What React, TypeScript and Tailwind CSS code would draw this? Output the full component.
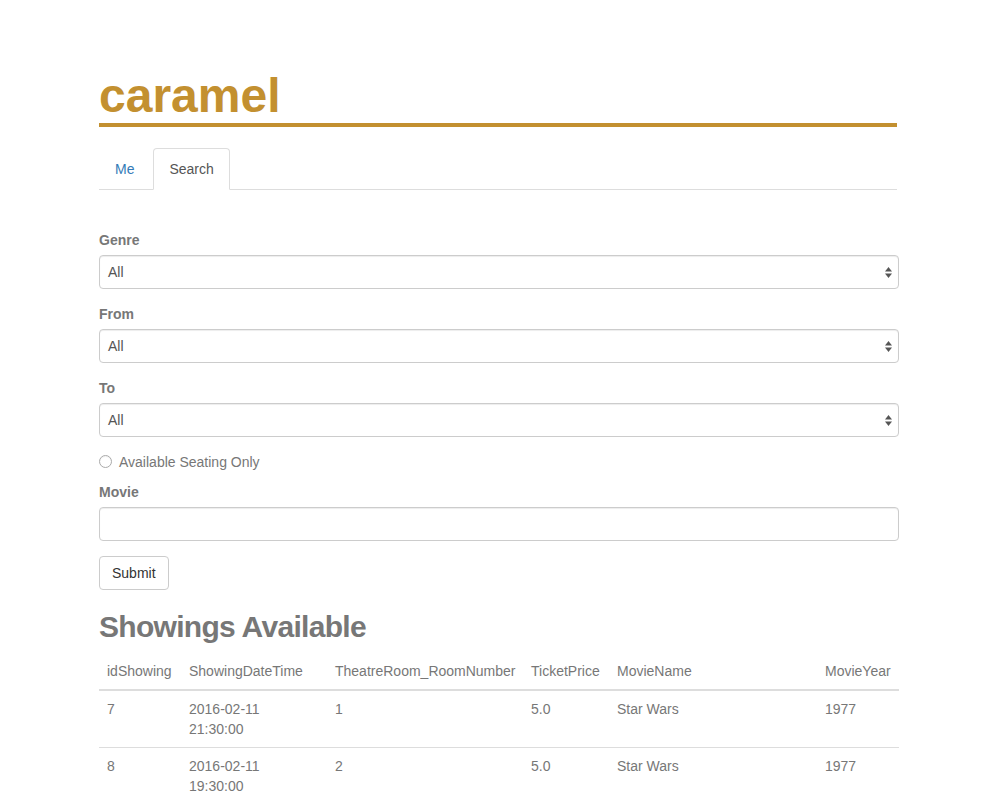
import React from 'react'

// Search results (would come from the API)
const SHOWINGS = [
  { id: '7', date: '2016-02-11', time: '21:30:00', room: '1', price: '5.0', name: 'Star Wars', year: '1977' },
  { id: '8', date: '2016-02-11', time: '19:30:00', room: '2', price: '5.0', name: 'Star Wars', year: '1977' },
]

const COLUMNS = [
  { label: 'idShowing', width: 'w-[82px]' },
  { label: 'ShowingDateTime', width: 'w-[146px]' },
  { label: 'TheatreRoom_RoomNumber', width: 'w-[196px]' },
  { label: 'TicketPrice', width: 'w-[86px]' },
  { label: 'MovieName', width: 'w-[208px]' },
  { label: 'MovieYear', width: 'w-[82px]' },
]

function SelectField({ label }: { label: string }) {
  return (
    <div className="mb-[15px]">
      <label className="block mb-[5px] text-[14px] leading-5 font-bold text-[#777]">{label}</label>
      <div className="relative h-[34px] border border-[#ccc] rounded-[4px] bg-white shadow-[inset_0_1px_1px_rgba(0,0,0,0.075)]">
        <div className="pl-[8px] leading-[32px] text-[14px] text-[#555]">All</div>
        <svg className="absolute right-[6px] top-[11px]" width="7" height="11" viewBox="0 0 7 11">
          <path d="M3.5 0 L7 4.5 L0 4.5 Z" fill="#555" />
          <path d="M3.5 11 L7 6.5 L0 6.5 Z" fill="#555" />
        </svg>
      </div>
    </div>
  )
}

export default function App() {
  return (
    <div className="min-h-[800px] bg-white font-['Liberation_Sans',Arial,sans-serif] text-[14px] text-[#777]">
      <div className="ml-[99px] w-[800px] pt-[70px]">
        {/* Header */}
        <h1 className="w-[798px] border-b-4 border-[#c39030] text-[48px] leading-[52.8px] font-bold text-[#c39030]">
          caramel
        </h1>

        {/* Tabs */}
        <ul className="mt-[21px] flex w-[798px] border-b border-[#ddd]">
          <li className="-mb-px mr-[3px]">
            <a className="block px-[15px] py-[10px] leading-5 border border-transparent text-[#337ab7]">Me</a>
          </li>
          <li className="-mb-px">
            <a className="block px-[15px] py-[10px] leading-5 border border-[#ddd] border-b-white rounded-t-[4px] bg-white text-[#555]">
              Search
            </a>
          </li>
        </ul>

        {/* Search form */}
        <form className="mt-[40px]">
          <SelectField label="Genre" />
          <SelectField label="From" />
          <SelectField label="To" />

          <div className="mb-[10px] flex items-center h-5">
            <span className="w-[13px] h-[13px] rounded-full border border-[#aaa] bg-white shadow-[inset_0_1px_1px_rgba(0,0,0,0.05)]" />
            <span className="ml-[7px] leading-5 text-[#777]">Available Seating Only</span>
          </div>

          <div className="mb-[15px]">
            <label className="block mb-[5px] leading-5 font-bold text-[#777]">Movie</label>
            <div className="h-[34px] border border-[#ccc] rounded-[4px] bg-white shadow-[inset_0_1px_1px_rgba(0,0,0,0.075)]" />
          </div>

          <button
            type="button"
            className="h-[34px] px-[12px] border border-[#ccc] rounded-[4px] bg-white text-[14px] text-[#333] leading-5"
          >
            Submit
          </button>
        </form>

        {/* Results */}
        <h2 className="mt-[20px] mb-[10px] text-[30px] leading-[33px] font-bold tracking-[-0.7px] text-[#777]">
          Showings Available
        </h2>

        <table className="w-[800px] table-fixed border-collapse">
          <thead>
            <tr>
              {COLUMNS.map((col) => (
                <th
                  key={col.label}
                  className={`${col.width} p-[8px] text-left font-normal leading-5 whitespace-nowrap border-b-2 border-[#ddd]`}
                >
                  {col.label}
                </th>
              ))}
            </tr>
          </thead>
          <tbody>
            {SHOWINGS.map((s) => (
              <tr key={s.id} className="border-b border-[#ddd] align-top">
                <td className="p-[8px] leading-5">{s.id}</td>
                <td className="p-[8px] leading-5">
                  {s.date}
                  <br />
                  {s.time}
                </td>
                <td className="p-[8px] leading-5">{s.room}</td>
                <td className="p-[8px] leading-5">{s.price}</td>
                <td className="p-[8px] leading-5">{s.name}</td>
                <td className="p-[8px] leading-5">{s.year}</td>
              </tr>
            ))}
          </tbody>
        </table>
      </div>
    </div>
  )
}
